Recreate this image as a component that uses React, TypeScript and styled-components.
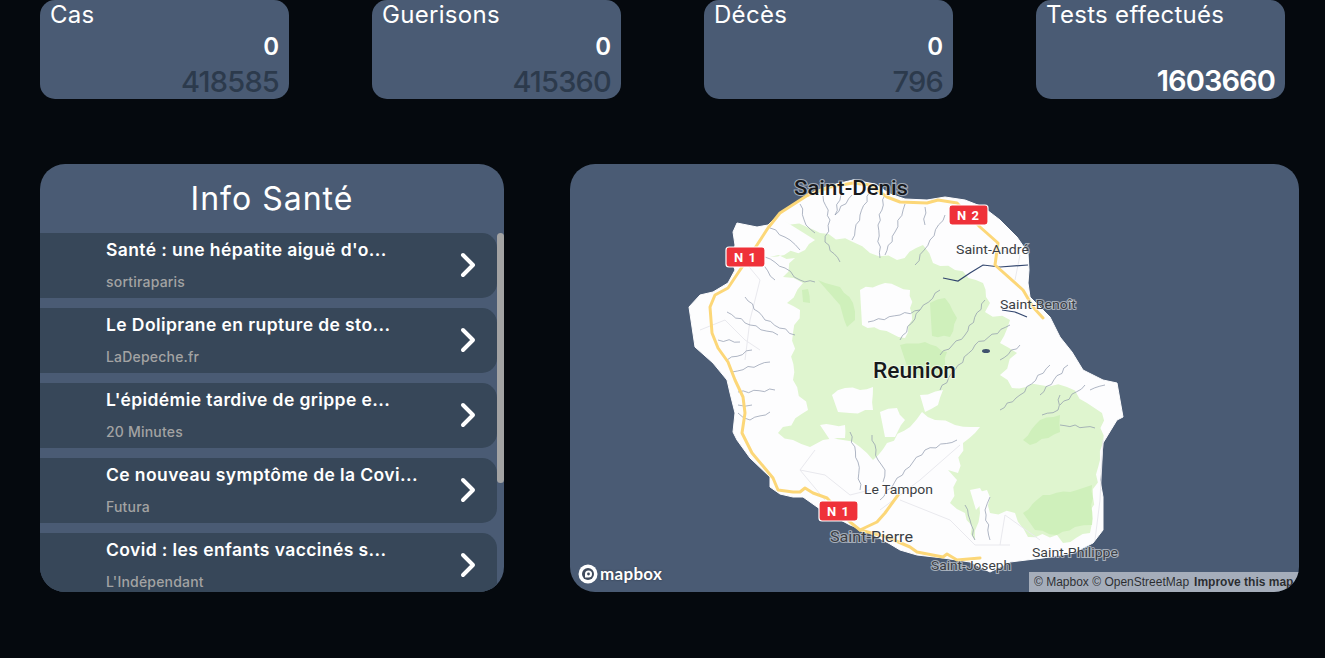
import styled, { createGlobalStyle } from "styled-components"
import { ChevronRight } from "lucide-react"

const GlobalStyle = createGlobalStyle`
    html, body {
        margin: 0;
        height: 100%;
        background: #05090e;
        overflow: hidden;
    }
    body {
        font-family: Inter, "Open Sans", sans-serif;
        color: #fff;
    }
`

const Page = styled.div`
    display: flex;
    flex-direction: column;
    gap: 65px;
    padding-left: 40px;
    padding-right: 26px;
`

const StatsRow = styled.div`
    display: flex;
    justify-content: space-between;
    padding-right: 14px;
`

const StatCard = styled.div`
    width: 249px;
    height: 99px;
    box-sizing: border-box;
    padding: 0 10px;
    background: #4a5b74;
    border-radius: 15px;
    display: flex;
    flex-direction: column;
`

const StatTitle = styled.div`
    font-size: 24px;
    line-height: 30px;
    letter-spacing: 0.3px;
`

const StatToday = styled.div`
    margin-top: 2px;
    height: 30px;
    font-size: 24px;
    line-height: 30px;
    font-weight: 600;
    text-align: right;
`

const StatTotal = styled.div<{ $light?: boolean }>`
    margin-top: 2px;
    font-size: 29px;
    line-height: 36px;
    text-align: right;
    letter-spacing: ${(p) => (p.$light ? "-0.9px" : "-0.8px")};
    font-weight: ${(p) => (p.$light ? 600 : 500)};
    color: ${(p) => (p.$light ? "#fff" : "#2c3a4c")};
`

const Panels = styled.div`
    display: flex;
    justify-content: space-between;
    height: 428px;
`

const NewsPanel = styled.section`
    position: relative;
    width: 464px;
    background: #4a5b74;
    border-radius: 25px;
    overflow: hidden;
    display: flex;
    flex-direction: column;
`

const NewsTitle = styled.h2`
    margin: 0;
    height: 69px;
    flex: none;
    font-size: 32px;
    line-height: 70px;
    font-weight: 400;
    letter-spacing: 1px;
    text-align: center;
`

const NewsList = styled.div`
    flex: 1;
    min-height: 0;
    overflow: hidden;
    padding-right: 7px;
    display: flex;
    flex-direction: column;
    gap: 10px;
`

const ScrollThumb = styled.div`
    position: absolute;
    top: 69px;
    right: 0;
    width: 7px;
    height: 250px;
    background: #a3a3a3;
    border-radius: 4px;
`

const NewsItem = styled.article`
    flex: none;
    height: 65px;
    box-sizing: border-box;
    padding: 5px 20px 0 66px;
    background: #374759;
    border-radius: 0 15px 15px 0;
    display: flex;
    align-items: flex-start;
    justify-content: space-between;
`

const NewsText = styled.div`
    display: flex;
    flex-direction: column;
    gap: 11px;
`

const NewsHeadline = styled.div`
    font-size: 17.5px;
    line-height: 24px;
    font-weight: 600;
    letter-spacing: 0.4px;
    white-space: nowrap;
`

const NewsSource = styled.div`
    font-size: 14px;
    line-height: 18px;
    font-weight: 500;
    letter-spacing: 0.2px;
    color: #a3a3a3;
`

const Arrow = styled(ChevronRight)`
    width: 40px;
    height: 40px;
    margin-top: 7px;
    margin-right: -11px;
    stroke-width: 2.4px;
    color: #fff;
`

const MapPanel = styled.section`
    position: relative;
    width: 729px;
    background: #4a5b74;
    border-radius: 25px;
    overflow: hidden;
`

const MapSvg = styled.svg`
    display: block;
    width: 729px;
    height: 428px;
`

const PlaceLabel = styled.text<{ $size: number; $strong?: boolean }>`
    font-family: Roboto, "Noto Sans", sans-serif;
    font-size: ${(p) => p.$size}px;
    font-weight: ${(p) => (p.$strong ? 500 : 400)};
    fill: ${(p) => (p.$strong ? "#17191c" : "#3b3e44")};
    stroke: rgba(255, 255, 255, 0.5);
    stroke-width: 2px;
    paint-order: stroke;
`

const ShieldText = styled.text`
    font-family: Roboto, sans-serif;
    font-size: 13px;
    font-weight: 700;
    fill: #fff;
    text-anchor: middle;
    letter-spacing: 1px;
`

const MapLogo = styled.div`
    position: absolute;
    left: 8px;
    bottom: 8px;
    display: flex;
    align-items: center;
    gap: 2px;
    font-family: Lato, sans-serif;
    font-size: 17px;
    font-weight: 700;
    letter-spacing: 0.3px;
    color: #fff;
    text-shadow: 0 0 2px rgba(0, 0, 0, 0.5);
`

const Attribution = styled.div`
    position: absolute;
    right: 0;
    bottom: 0;
    width: 270px;
    height: 20px;
    box-sizing: border-box;
    padding-left: 5px;
    background: rgba(255, 255, 255, 0.5);
    display: flex;
    gap: 5px;
    font-family: "Liberation Sans", Arial, sans-serif;
    font-size: 12px;
    line-height: 20px;
    white-space: nowrap;
    color: rgba(0, 0, 0, 0.75);
`

const ImproveLink = styled.span`
    font-weight: 700;
`

const stats = [
    { title: "Cas", today: "0", total: "418585" },
    { title: "Guerisons", today: "0", total: "415360" },
    { title: "Décès", today: "0", total: "796" },
    { title: "Tests effectués", today: "", total: "1603660", light: true },
]

const news = [
    { title: "Santé : une hépatite aiguë d'o...", source: "sortiraparis" },
    { title: "Le Doliprane en rupture de sto...", source: "LaDepeche.fr" },
    { title: "L'épidémie tardive de grippe e...", source: "20 Minutes" },
    { title: "Ce nouveau symptôme de la Covi...", source: "Futura" },
    { title: "Covid : les enfants vaccinés s...", source: "L'Indépendant" },
]

const coast =
    "689,307 700,295 713,292 728,283 735,270 732,262 735,245 733,232 737,223 757,227 768,225 780,213 808,195 828,186 853,180 875,184 890,194 905,199 927,200 945,197 965,200 983,207 1000,220 1017,237 1028,253 1029,270 1028,283 1030,297 1050,317 1060,337 1072,352 1083,370 1103,380 1117,383 1123,417 1117,420 1103,443 1100,480 1103,497 1103,530 1093,543 1073,553 1043,558 1010,562 990,572 970,562 943,558 917,555 900,550 890,544 870,533 850,525 820,509 803,497 793,497 780,494 770,487 770,477 750,458 737,440 733,432 735,413 730,393 727,380 713,363 695,347 692,327"

const forest =
    "783,220 807,227 820,233 853,242 870,253 897,260 923,245 933,263 955,270 983,283 990,303 985,312 1010,320 1000,343 1017,353 1000,375 1012,388 1040,385 1067,387 1087,403 1102,413 1103,443 1100,460 1093,497 1090,533 1063,543 1057,535 1028,537 1015,513 990,513 987,490 975,493 980,513 975,540 965,513 950,503 957,480 948,470 958,473 963,443 980,427 955,425 935,420 922,412 910,427 887,443 873,460 860,447 843,440 823,440 810,447 793,440 778,433 808,410 793,380 793,333 800,310 787,303 803,283 783,277 795,258 770,257 805,250 815,240"

const clearings = [
    "860,290 885,283 910,290 912,320 905,338 880,330 862,325",
    "832,395 845,388 860,390 873,387 873,410 850,413 838,412",
    "880,412 897,408 905,420 895,437 885,437",
    "820,425 845,425 845,438 830,440",
    "920,395 943,390 938,405 925,412",
    "970,490 980,488 984,500 976,510",
]

const darkForest = [
    "818,280 840,287 853,303 855,320 847,327 840,305",
    "802,290 808,289 810,303 803,302",
    "930,303 945,298 957,318 950,337 932,336",
    "900,345 925,342 947,352 942,377 910,375",
    "1023,440 1040,420 1060,415 1060,432 1030,445",
    "1023,513 1043,495 1077,490 1092,485 1092,525 1075,527 1057,535 1035,530",
]

const rivers = [
    "800,204 806,225 815,233",
    "823,196 830,220 825,242 840,262",
    "842,190 835,215 852,195",
    "870,192 860,215 852,240",
    "885,195 878,225 880,258",
    "905,204 895,232 885,255",
    "925,207 925,225",
    "945,215 930,240 915,265",
    "770,228 790,240 800,250",
    "765,257 785,268 800,280 815,282",
    "760,262 775,280",
    "745,297 765,320 795,335",
    "727,312 750,325 778,335",
    "718,340 740,342",
    "727,360 752,350",
    "732,372 770,362",
    "738,392 775,390",
    "738,405 752,405",
    "738,413 750,420 770,412",
    "872,435 878,460 885,470 883,482",
    "850,432 858,462 860,490",
    "1050,365 1020,395 1000,410",
    "1068,365 1040,395",
    "1085,385 1060,405",
    "1010,325 975,345 955,370 940,390",
    "1020,345 1000,360",
    "965,505 970,520 975,540",
    "990,497 985,510 990,540",
    "957,440 925,450 905,470 880,500",
    "1060,425 1095,428",
    "1090,390 1105,385",
    "1060,395 1058,410 1042,415",
    "868,322 900,315 920,310",
    "940,290 920,310 900,340",
    "985,300 965,335 940,355",
]

const darkRivers = [
    "943,278 958,281 970,273 983,265 1000,267 1028,265",
    "1002,310 1015,312 1027,317",
]

const minorRoads = [
    "700,330 725,320 745,340 760,350",
    "735,250 760,280 750,320 745,360",
    "800,470 825,475 850,495 870,490",
    "815,450 800,470 825,500",
    "880,510 920,480 960,445",
    "900,500 950,520 975,545 1010,545",
    "1000,545 1005,515 1040,540",
    "1103,440 1100,500 1095,540",
    "1000,250 1020,255 1015,280",
]

const road =
    "808,195 780,213 768,228 757,245 738,273 728,288 715,295 710,307 712,333 718,348 728,362 735,380 743,397 745,413 742,433 752,453 773,478 778,490 793,492 800,492 805,488 813,493 827,498 838,510 850,522 860,530 887,537 910,547 917,552 943,557 947,554 957,560 980,558"

const roadBranch = "860,530 877,522 885,513 898,495"

const roadNorth =
    "808,195 830,187 853,183 870,185 887,197 900,202 927,203 938,200 957,203 980,227 998,243 995,265 1023,290 1033,307 1043,318"

const places = [
    { name: "Saint-Denis", x: 794, y: 195, size: 20, width: 114, strong: true },
    { name: "Saint-André", x: 956, y: 254, size: 13, width: 73 },
    { name: "Saint-Benoît", x: 1000, y: 309, size: 13, width: 76 },
    { name: "Reunion", x: 873, y: 378, size: 22, width: 83, strong: true },
    { name: "Le Tampon", x: 864, y: 494, size: 13, width: 69 },
    { name: "Saint-Pierre", x: 830, y: 542, size: 14.5, width: 83 },
    { name: "Saint-Joseph", x: 931, y: 570, size: 13.5, width: 80 },
    { name: "Saint-Philippe", x: 1032, y: 557, size: 13.5, width: 86 },
]

const shields = [
    { label: "N 1", x: 726, y: 247 },
    { label: "N 2", x: 949, y: 205 },
    { label: "N 1", x: 819, y: 501 },
]

// breaks a straight polyline into short steps with a small sideways offset, so it reads as a hand-mapped stream or edge
const roughen = (points: string, step: number, amount: number) => {
    const pts = points.split(" ").map((p) => p.split(",").map(Number))
    const out: string[] = []
    pts.forEach(([x, y], i) => {
        out.push(`${x},${y}`)
        const next = pts[i + 1]
        if (!next) return
        const dist = Math.hypot(next[0] - x, next[1] - y)
        const count = Math.floor(dist / step)
        for (let k = 1; k < count; k++) {
            const t = k / count
            const off = Math.sin((x + y) * 3.1 + k * 2.3) * amount
            const nx = -(next[1] - y) / dist
            const ny = (next[0] - x) / dist
            out.push(`${(x + (next[0] - x) * t + nx * off).toFixed(1)},${(y + (next[1] - y) * t + ny * off).toFixed(1)}`)
        }
    })
    return out.join(" ")
}

const IslandMap = () => {
    return (
        <MapSvg viewBox="570 164 729 428">
            <polygon points={coast} fill="#fdfdfe" stroke="#fdfdfe" strokeWidth="1" strokeLinejoin="round" />
            <polygon points={roughen(forest, 7, 2.2)} fill="#dff5cf" />
            {clearings.map((c) => (
                <polygon key={c} points={roughen(c, 6, 1.5)} fill="#fdfdfe" />
            ))}
            {darkForest.map((c) => (
                <polygon key={c} points={roughen(c, 6, 1)} fill="#cff0bb" />
            ))}
            {minorRoads.map((c) => (
                <polyline key={c} points={c} fill="none" stroke="#e9e9ee" strokeWidth="1" />
            ))}
            {rivers.map((c) => (
                <polyline key={c} points={roughen(c, 5, 1.3)} fill="none" stroke="#8d97aa" strokeWidth="0.7" />
            ))}
            {darkRivers.map((c) => (
                <polyline key={c} points={c} fill="none" stroke="#33476f" strokeWidth="1.2" />
            ))}
            <ellipse cx="986" cy="351" rx="4" ry="2" fill="#40526e" />
            {[road, roadBranch, roadNorth].map((c) => (
                <polyline
                    key={c}
                    points={c}
                    fill="none"
                    stroke="#fcd778"
                    strokeWidth="3"
                    strokeLinejoin="round"
                    strokeLinecap="round"
                />
            ))}
            {shields.map((s) => (
                <g key={s.x}>
                    <rect x={s.x} y={s.y} width="39" height="20" rx="3" fill="#ef3139" stroke="#fff" strokeWidth="1.2" />
                    <ShieldText x={s.x + 19.5} y={s.y + 15}>
                        {s.label}
                    </ShieldText>
                </g>
            ))}
            {places.map((p) => (
                <PlaceLabel
                    key={p.name}
                    x={p.x}
                    y={p.y}
                    $size={p.size}
                    $strong={p.strong}
                    textLength={p.width}
                    lengthAdjust="spacingAndGlyphs"
                >
                    {p.name}
                </PlaceLabel>
            ))}
        </MapSvg>
    )
}

const MapboxMark = () => {
    return (
        <svg width="20" height="20" viewBox="0 0 20 20">
            <circle cx="10" cy="10" r="9.5" fill="#fff" />
            <circle cx="10" cy="10" r="6" fill="#3f4a5c" />
            <path d="M7 13.5 V10 a3.5 3.5 0 1 1 3.5 3.5 Z" fill="#fff" />
            <circle cx="10.5" cy="10" r="1.4" fill="#3f4a5c" />
        </svg>
    )
}

const App = () => {
    return (
        <>
            <GlobalStyle />
            <Page>
                <StatsRow>
                    {stats.map((s) => (
                        <StatCard key={s.title}>
                            <StatTitle>{s.title}</StatTitle>
                            <StatToday>{s.today}</StatToday>
                            <StatTotal $light={s.light}>{s.total}</StatTotal>
                        </StatCard>
                    ))}
                </StatsRow>
                <Panels>
                    <NewsPanel>
                        <NewsTitle>Info Santé</NewsTitle>
                        <NewsList>
                            {news.map((n) => (
                                <NewsItem key={n.source}>
                                    <NewsText>
                                        <NewsHeadline>{n.title}</NewsHeadline>
                                        <NewsSource>{n.source}</NewsSource>
                                    </NewsText>
                                    <Arrow />
                                </NewsItem>
                            ))}
                        </NewsList>
                        <ScrollThumb />
                    </NewsPanel>
                    <MapPanel>
                        <IslandMap />
                        <MapLogo>
                            <MapboxMark />
                            mapbox
                        </MapLogo>
                        <Attribution>
                            <span>© Mapbox © OpenStreetMap</span>
                            <ImproveLink>Improve this map</ImproveLink>
                        </Attribution>
                    </MapPanel>
                </Panels>
            </Page>
        </>
    )
}

export default App
